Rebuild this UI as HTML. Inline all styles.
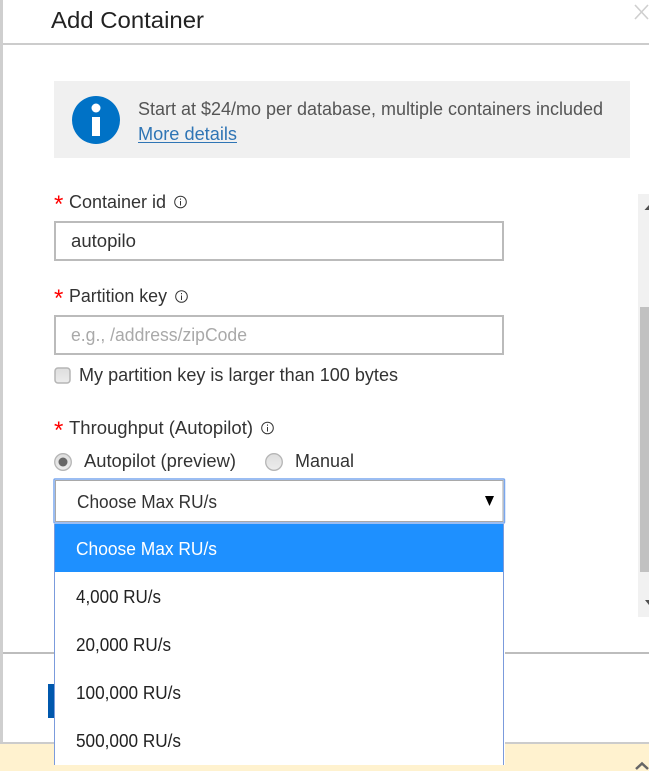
<!DOCTYPE html>
<html>
<head>
<meta charset="utf-8">
<style>
html,body{margin:0;padding:0;background:#fff;width:649px;height:771px;overflow:hidden}
svg{display:block}
text{font-family:"Liberation Sans",sans-serif;font-size:18px;fill:#333}
</style>
</head>
<body>
<svg width="649" height="771" viewBox="0 0 649 771" xmlns="http://www.w3.org/2000/svg">
<defs>
<linearGradient id="g" x1="0" y1="0" x2="0" y2="1"><stop offset="0" stop-color="#dedede"/><stop offset="1" stop-color="#ececec"/></linearGradient>
</defs>
<rect width="649" height="771" fill="#fff"/>
<rect x="0" y="0" width="3" height="742" fill="#cfcfcf"/>
<rect x="3" y="43" width="646" height="2" fill="#cccccc"/>
<rect x="3" y="652" width="646" height="2" fill="#bdbdbd"/>
<rect x="0" y="742" width="649" height="29" fill="#fff2cf"/>
<rect x="0" y="742" width="649" height="2" fill="#cccccc"/>
<rect x="48" y="684" width="8" height="34" fill="#0058ad"/>

<text x="51" y="28" style="font-size:23px;fill:#222" textLength="153" lengthAdjust="spacingAndGlyphs">Add Container</text>
<path d="M635 5L648 19M648 5L635 19" stroke="#cfcfcf" stroke-width="1.6" fill="none"/>

<rect x="54" y="81" width="576" height="77" fill="#f0f0f0"/>
<circle cx="96" cy="120" r="24" fill="#0072c6"/>
<circle cx="96" cy="108" r="4.500" fill="#fff"/>
<rect x="92" y="117" width="8" height="19" fill="#fff"/>
<text x="138" y="115" style="fill:#555" textLength="465" lengthAdjust="spacingAndGlyphs">Start at $24/mo per database, multiple containers included</text>
<text x="138" y="140" style="fill:#2f75b5" textLength="99" lengthAdjust="spacingAndGlyphs">More details</text>
<rect x="138" y="142" width="99" height="1" fill="#2f75b5"/>

<text x="54" y="212" style="fill:#f00;font-size:24px">*</text>
<text x="69" y="208" textLength="97" lengthAdjust="spacingAndGlyphs">Container id</text>
<g fill="none" stroke="#333" stroke-width="1"><circle cx="180.500" cy="202" r="5.800"/><path d="M180.500 201v4.500M180.500 198.500v1.200"/></g>
<rect x="55" y="222" width="448" height="38" fill="#fff" stroke="#bbbbbb" stroke-width="2"/>
<text x="71" y="247" textLength="65" lengthAdjust="spacingAndGlyphs">autopilo</text>

<text x="54" y="306" style="fill:#f00;font-size:24px">*</text>
<text x="69" y="302" textLength="98" lengthAdjust="spacingAndGlyphs">Partition key</text>
<g fill="none" stroke="#333" stroke-width="1"><circle cx="181.500" cy="296.500" r="5.800"/><path d="M181.500 295.500v4.500M181.500 293v1.200"/></g>
<rect x="55" y="316" width="448" height="38" fill="#fff" stroke="#bbbbbb" stroke-width="2"/>
<text x="71" y="341" style="fill:#a9a9a9" textLength="176" lengthAdjust="spacingAndGlyphs">e.g., /address/zipCode</text>

<rect x="55" y="368" width="15" height="15" rx="3" fill="url(#g)" stroke="#b5b5b5" stroke-width="1.500"/>
<text x="79" y="381" textLength="319" lengthAdjust="spacingAndGlyphs">My partition key is larger than 100 bytes</text>

<text x="54" y="438" style="fill:#f00;font-size:24px">*</text>
<text x="69" y="434" textLength="184" lengthAdjust="spacingAndGlyphs">Throughput (Autopilot)</text>
<g fill="none" stroke="#333" stroke-width="1"><circle cx="267.500" cy="428" r="5.800"/><path d="M267.500 427v4.500M267.500 424.500v1.200"/></g>

<circle cx="63" cy="462" r="8.300" fill="url(#g)" stroke="#b5b5b5" stroke-width="1.300"/>
<circle cx="63" cy="462" r="4.500" fill="#666"/>
<text x="84" y="467" textLength="152" lengthAdjust="spacingAndGlyphs">Autopilot (preview)</text>
<circle cx="274" cy="462" r="8.300" fill="url(#g)" stroke="#b5b5b5" stroke-width="1.300"/>
<text x="295" y="467" textLength="59" lengthAdjust="spacingAndGlyphs">Manual</text>

<rect x="638" y="194" width="11" height="423" fill="#f1f1f1"/>
<rect x="640" y="307" width="9" height="265" fill="#c1c1c1"/>
<path d="M649 205L649 210L644.500 210Z" fill="#505050"/>
<path d="M645 600L649 600L649 605Z" fill="#505050"/>

<rect x="54" y="523" width="451" height="242" fill="#fff"/>
<rect x="54" y="524" width="1" height="241" fill="#7b9bdc"/>
<rect x="503" y="524" width="1" height="241" fill="#7b9bdc"/>
<rect x="55" y="524" width="448" height="48" fill="#1e90ff"/>
<rect x="54" y="479" width="450.500" height="44" rx="1" fill="#fff" stroke="#7aa7ee" stroke-width="1.500"/>
<rect x="55.500" y="480.500" width="447.500" height="41" fill="none" stroke="#a9a9a9" stroke-width="1"/>
<text x="77" y="508" textLength="140" lengthAdjust="spacingAndGlyphs">Choose Max RU/s</text>
<path d="M485 496L494 496L489.500 506Z" fill="#000"/>

<text x="76" y="555" style="fill:#fff" textLength="141" lengthAdjust="spacingAndGlyphs">Choose Max RU/s</text>
<text x="76" y="603" style="fill:#222" textLength="85" lengthAdjust="spacingAndGlyphs">4,000 RU/s</text>
<text x="76" y="651" style="fill:#222" textLength="95" lengthAdjust="spacingAndGlyphs">20,000 RU/s</text>
<text x="76" y="699" style="fill:#222" textLength="105" lengthAdjust="spacingAndGlyphs">100,000 RU/s</text>
<text x="76" y="747" style="fill:#222" textLength="105" lengthAdjust="spacingAndGlyphs">500,000 RU/s</text>

<path d="M636 769L642 763.500L648 769" fill="none" stroke="#666" stroke-width="2.500"/>
</svg>
</body>
</html>
